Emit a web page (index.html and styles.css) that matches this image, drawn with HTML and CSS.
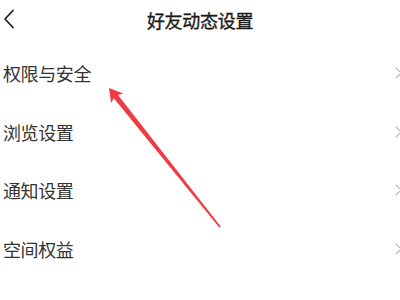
FILE: index.html
```html
<!DOCTYPE html>
<html lang="zh-CN">
<head>
<meta charset="utf-8">
<title>好友动态设置</title>
<link rel="stylesheet" href="styles.css">
</head>
<body>
<div class="page">
  <header class="topbar">
    <span class="back">
      <svg width="14" height="20" viewBox="0 0 14 20"><path d="M11 1.5 L3 10 L11 18.5" fill="none" stroke="#222" stroke-width="1.8" stroke-linecap="round" stroke-linejoin="round"/></svg>
    </span>
    <h1 class="title">好友动态设置</h1>
  </header>
  <ul class="list">
    <li class="row"><span class="label">权限与安全</span><span class="chev"></span></li>
    <li class="row"><span class="label">浏览设置</span><span class="chev"></span></li>
    <li class="row"><span class="label">通知设置</span><span class="chev"></span></li>
    <li class="row"><span class="label">空间权益</span><span class="chev"></span></li>
    <li class="row"><span class="label">内容设置</span><span class="chev"></span></li>
  </ul>
  <svg class="annot" width="400" height="300" viewBox="0 0 400 300">
    <polygon fill="#ef3b41" points="109,88 123.2,93.4 118.0,95.0 220.7,226.4 219.3,227.6 113.8,98.3 111.1,103.0"/>
  </svg>
</div>
</body>
</html>
```

FILE: styles.css
```css
* { box-sizing: border-box; }
html, body { margin: 0; padding: 0; background: #fff; }
body {
  font-family: "Noto Sans CJK SC", "Noto Sans", sans-serif;
  color: #333;
}
.page {
  position: relative;
  width: 400px;
  height: 300px;
  overflow: hidden;
  background: #fff;
}
.topbar {
  position: relative;
  height: 40px;
  display: flex;
  align-items: center;
  justify-content: center;
}
.back {
  position: absolute;
  left: 2px;
  top: 9px;
  display: flex;
}
.title {
  margin: 0;
  font-size: 18px;
  font-weight: 400;
  color: #1a1a1a;
  -webkit-text-stroke: 0.35px #1a1a1a;
  line-height: 40px;
  letter-spacing: -0.3px;
}
.list {
  list-style: none;
  margin: 0;
  padding: 4px 0 0 0;
}
.row {
  height: 58.6px;
  display: flex;
  align-items: center;
  justify-content: space-between;
  padding-left: 3px;
}
.label {
  font-size: 18px;
  color: #333;
  letter-spacing: -0.4px;
}
.chev {
  width: 8px;
  height: 8px;
  border-top: 1.4px solid #b0b0b0;
  border-right: 1.4px solid #b0b0b0;
  transform: rotate(45deg);
  margin-right: 0;
}
.annot {
  position: absolute;
  left: 0;
  top: 0;
  pointer-events: none;
}
```
